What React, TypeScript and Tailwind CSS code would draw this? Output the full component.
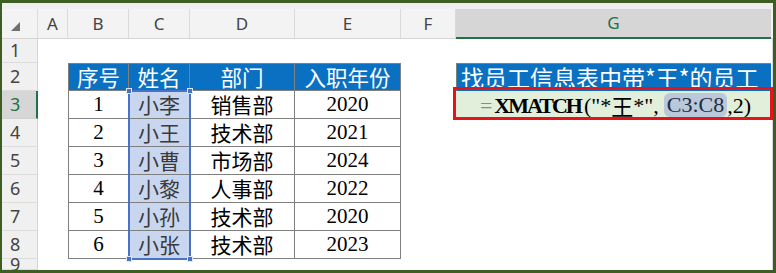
import React from "react";

const cjk = "font-['Noto_Sans_CJK_SC',sans-serif]";
const serifNum = "font-['Liberation_Serif','Noto_Sans_CJK_SC',serif]";
const ui = "font-['Noto_Sans',sans-serif]";

const columns = ["A", "B", "C", "D", "E", "F", "G"];

const rows = [
  { no: "1", name: "小李", dept: "销售部", year: "2020" },
  { no: "2", name: "小王", dept: "技术部", year: "2021" },
  { no: "3", name: "小曹", dept: "市场部", year: "2024" },
  { no: "4", name: "小黎", dept: "人事部", year: "2022" },
  { no: "5", name: "小孙", dept: "技术部", year: "2020" },
  { no: "6", name: "小张", dept: "技术部", year: "2023" },
];

const tableBorder = "border-r border-b border-[#7f7f7f]";

function RowHead({ n, active }: { n: string; active?: boolean }) {
  return (
    <div
      className={
        active
          ? `${ui} flex items-center pl-[8px] text-[18px] text-[#217346] bg-[#d6d6d6] border-b border-[#d0d0d0] border-r-2 border-r-[#217346]`
          : `${ui} flex items-center pl-[8px] text-[18px] text-[#444] bg-[#f0f0f0] border-b border-[#dcdcdc] border-r border-r-[#d4d4d4]`
      }
    >
      {n}
    </div>
  );
}

function Blank() {
  return <div className="bg-white" />;
}

function Edge() {
  return <div className="bg-white border-r border-[#d8d8d8]" />;
}

function SelectionFrame() {
  return (
    <div className="absolute left-[-1px] top-[-1px] w-[63px] h-[170px] border-2 border-[#4a72c4] z-10 pointer-events-none">
      <span className="absolute -left-[4px] -top-[4px] w-[6px] h-[6px] bg-[#4a72c4] border border-[#dfe7f7]" />
      <span className="absolute -right-[4px] -top-[4px] w-[6px] h-[6px] bg-[#4a72c4] border border-[#dfe7f7]" />
      <span className="absolute -left-[4px] -bottom-[4px] w-[6px] h-[6px] bg-[#4a72c4] border border-[#dfe7f7]" />
      <span className="absolute -right-[4px] -bottom-[4px] w-[6px] h-[6px] bg-[#4a72c4] border border-[#dfe7f7]" />
    </div>
  );
}

function FormulaCell() {
  return (
    <div className="relative bg-[#e2efda] flex items-center justify-center">
      <div className="absolute -left-[3px] -top-[4px] -right-[2px] -bottom-[1px] border-[3px] border-[#e5141b] z-10 pointer-events-none" />
      <div className={`${serifNum} text-[22px] text-black flex items-center whitespace-nowrap pl-[4px]`}>
        <span className="text-[#8a8a8a] mr-[2px]">=</span>
        <span className="font-bold tracking-[-2px] mr-[3px]">XMATCH</span>
        <span>(</span>
        <span>"*</span>
        <span className={cjk}>王</span>
        <span>*",</span>
        <span className="ml-[5px] px-[3px] rounded-[6px] bg-[#b9c8da] text-[#1f2d40] leading-[24px]">C3:C8</span>
        <span>,2)</span>
      </div>
    </div>
  );
}

export default function App() {
  return (
    <div className="w-[776px] h-[273px] bg-[#3e5d22] pt-[3px] pl-[2px] pr-[3px] pb-[3px] overflow-hidden">
      <div className="w-[771px] h-[267px] bg-white flex flex-col overflow-hidden">
        <div className="h-[6px] bg-[#efeff1]" />
        <div className="grid grid-cols-[36px_30px_61px_61px_105px_106px_55px_315px_2px] grid-rows-[30px_24px_28px_28px_28px_28px_28px_28px_28px_11px]">
          {/* column headers */}
          <div className="relative bg-[#f3f3f3] border-b border-[#d4d4d4] border-r border-r-[#dcdcdc]">
            <svg className="absolute left-[9px] top-[13px]" width="9" height="9" viewBox="0 0 9 9">
              <polygon points="9,0 9,9 0,9" fill="#707070" />
            </svg>
          </div>
          {columns.map((c) =>
            c === "G" ? (
              <div
                key={c}
                className={`${ui} flex items-center justify-center text-[17px] text-[#217346] bg-[#d6d6d6] border-b-2 border-[#217346]`}
              >
                {c}
              </div>
            ) : (
              <div
                key={c}
                className={`${ui} flex items-center justify-center text-[17px] text-[#444] bg-[#f3f3f3] border-b border-[#d4d4d4] border-r border-r-[#dadada]`}
              >
                {c}
              </div>
            )
          )}
          <div className="bg-[#f3f3f3] border-b border-[#d4d4d4]" />

          {/* row 1 */}
          <RowHead n="1" />
          <Blank />
          <Blank />
          <Blank />
          <Blank />
          <Blank />
          <Blank />
          <Blank />
          <Edge />

          {/* row 2: table header */}
          <RowHead n="2" />
          <Blank />
          <div className={`${cjk} flex items-center justify-center text-[21.5px] text-white bg-[#0a70c2] border-t border-l ${tableBorder}`}>序号</div>
          <div className={`${cjk} flex items-center justify-center text-[21.5px] text-white bg-[#0a70c2] border-t ${tableBorder}`}>姓名</div>
          <div className={`${cjk} flex items-center justify-center text-[21.5px] text-white bg-[#0a70c2] border-t ${tableBorder}`}>部门</div>
          <div className={`${cjk} flex items-center justify-center text-[21.5px] text-white bg-[#0a70c2] border-t ${tableBorder}`}>入职年份</div>
          <Blank />
          <div className={`${cjk} flex items-center pl-[4px] text-[23px] text-white bg-[#0a70c2] border-t border-l border-[#7f7f7f] whitespace-nowrap overflow-hidden`}>
            找员工信息表中带*王*的员工
          </div>
          <Edge />

          {/* rows 3-8: data */}
          {rows.map((r, i) => (
            <React.Fragment key={r.no}>
              <RowHead n={String(i + 3)} active={i === 0} />
              <Blank />
              <div className={`${serifNum} flex items-center justify-center text-[21px] text-black bg-white border-l ${tableBorder}`}>{r.no}</div>
              <div className={`${cjk} ${i === 0 ? "relative" : ""} flex items-center justify-center text-[21px] text-[#3a3a3a] bg-[#c9d6ef] ${tableBorder}`}>
                {r.name}
                {i === 0 && <SelectionFrame />}
              </div>
              <div className={`${cjk} flex items-center justify-center text-[21px] text-black bg-white ${tableBorder}`}>{r.dept}</div>
              <div className={`${serifNum} flex items-center justify-center text-[21px] text-black bg-white ${tableBorder}`}>{r.year}</div>
              <Blank />
              {i === 0 ? <FormulaCell /> : <Blank />}
              <Edge />
            </React.Fragment>
          ))}

          {/* row 9 */}
          <RowHead n="9" />
          <Blank />
          <Blank />
          <Blank />
          <Blank />
          <Blank />
          <Blank />
          <Blank />
          <Edge />
        </div>
      </div>
    </div>
  );
}
